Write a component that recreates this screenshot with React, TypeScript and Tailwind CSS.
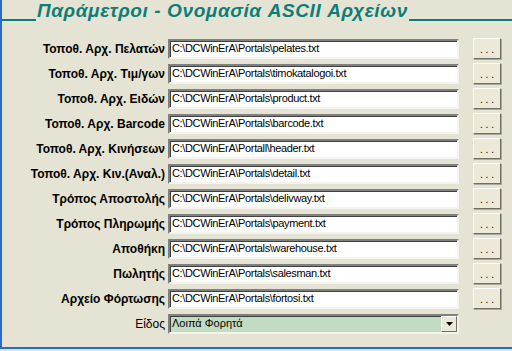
const rows: [string, string][] = [
  ["Τοποθ. Αρχ. Πελατών", "C:\\DCWinErA\\Portals\\pelates.txt"],
  ["Τοποθ. Αρχ. Τιμ/γων", "C:\\DCWinErA\\Portals\\timokatalogoi.txt"],
  ["Τοποθ. Αρχ. Ειδών", "C:\\DCWinErA\\Portals\\product.txt"],
  ["Τοποθ. Αρχ. Barcode", "C:\\DCWinErA\\Portals\\barcode.txt"],
  ["Τοποθ. Αρχ. Κινήσεων", "C:\\DCWinErA\\Portall\\header.txt"],
  ["Τοποθ. Αρχ. Κιν.(Αναλ.)", "C:\\DCWinErA\\Portals\\detail.txt"],
  ["Τρόπος Αποστολής", "C:\\DCWinErA\\Portals\\delivway.txt"],
  ["Τρόπος Πληρωμής", "C:\\DCWinErA\\Portals\\payment.txt"],
  ["Αποθήκη", "C:\\DCWinErA\\Portals\\warehouse.txt"],
  ["Πωλητής", "C:\\DCWinErA\\Portals\\salesman.txt"],
  ["Αρχείο Φόρτωσης", "C:\\DCWinErA\\Portals\\fortosi.txt"],
];

const inset =
  "border-2 border-t-[#808080] border-l-[#808080] border-b-[#f4f3ee] border-r-[#f4f3ee] shadow-[inset_1px_1px_0_#404040]";

function Field({ label, value }: { label: string; value: string }) {
  return (
    <div className="flex h-[25px] items-center">
      <div className="w-[166px] pr-[3px] text-right text-[12px] font-bold text-black">
        {label}
      </div>
      <div
        className={`flex h-[20px] w-[291px] items-center bg-white pl-[2px] text-[11px] tracking-[-0.35px] text-black ${inset}`}
      >
        {value}
      </div>
      <button className="ml-[14px] flex h-[21px] w-[28px] items-start justify-center border border-b-[#716f64] border-r-[#716f64] border-l-white border-t-white bg-[#ece9d8] pt-[6px] text-[10px] leading-none text-black shadow-[1px_1px_0_#aca899]">
        . . .
      </button>
    </div>
  );
}

export default function App() {
  return (
    <div className="h-[351px] w-[512px] overflow-hidden bg-[#e5e3d3] font-['Liberation_Sans',sans-serif]">
      <div className="flex h-[349px] flex-col border-b-2 border-l-2 border-[#2d68c4]">
        <div className="flex h-[23px] items-end">
          <div className="mb-[2px] h-[2px] w-[34px] bg-[#0c7e78]" />
          <h1 className="px-[1px] pb-[3px] font-['Liberation_Sans',sans-serif] text-[19px] font-bold italic leading-none tracking-[0.6px] text-[#0c7e78]">
            Παράμετροι - Ονομασία ASCII Αρχείων
          </h1>
          <div className="mb-[2px] h-[2px] flex-1 bg-[#0c7e78]" />
        </div>
        <div className="mt-[13px] flex flex-col">
          {rows.map(([l, v]) => (
            <Field key={l} label={l} value={v} />
          ))}
          <div className="flex h-[25px] items-center">
            <div className="w-[166px] pr-[3px] text-right text-[12px] text-black">
              Είδος
            </div>
            <div
              className={`flex h-[20px] w-[291px] items-center bg-[#c2dcc4] pl-[2px] text-[11px] text-black ${inset}`}
            >
              <span className="flex-1">Λοιπά Φορητά</span>
              <span className="flex h-[16px] w-[16px] items-center justify-center border border-b-[#716f64] border-r-[#716f64] border-l-white border-t-white bg-[#ece9d8]">
                <svg width="7" height="4" viewBox="0 0 7 4">
                  <path d="M0 0h7L3.5 4z" fill="#000" />
                </svg>
              </span>
            </div>
          </div>
        </div>
      </div>
    </div>
  );
}
